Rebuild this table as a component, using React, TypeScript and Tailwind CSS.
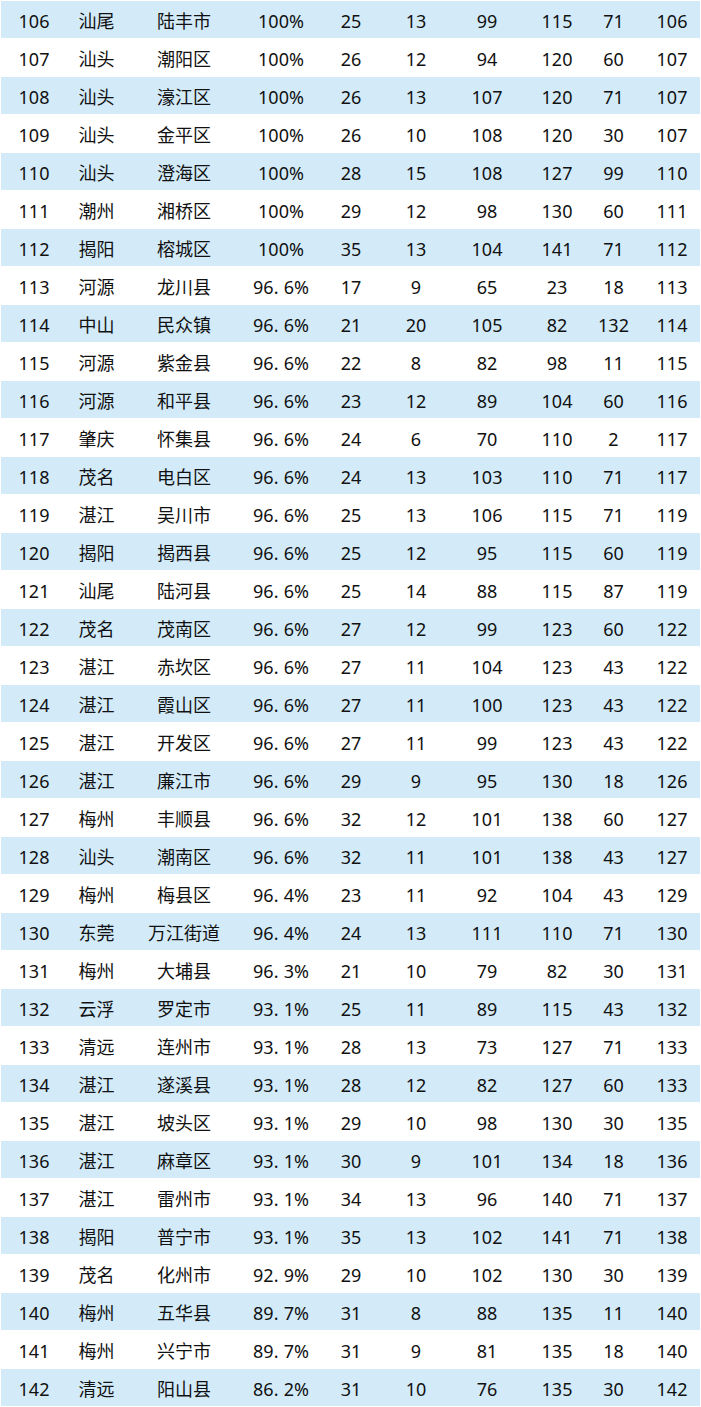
const rows = `106 汕尾 陆丰市 100% 25 13 99 115 71 106
107 汕头 潮阳区 100% 26 12 94 120 60 107
108 汕头 濠江区 100% 26 13 107 120 71 107
109 汕头 金平区 100% 26 10 108 120 30 107
110 汕头 澄海区 100% 28 15 108 127 99 110
111 潮州 湘桥区 100% 29 12 98 130 60 111
112 揭阳 榕城区 100% 35 13 104 141 71 112
113 河源 龙川县 96.6% 17 9 65 23 18 113
114 中山 民众镇 96.6% 21 20 105 82 132 114
115 河源 紫金县 96.6% 22 8 82 98 11 115
116 河源 和平县 96.6% 23 12 89 104 60 116
117 肇庆 怀集县 96.6% 24 6 70 110 2 117
118 茂名 电白区 96.6% 24 13 103 110 71 117
119 湛江 吴川市 96.6% 25 13 106 115 71 119
120 揭阳 揭西县 96.6% 25 12 95 115 60 119
121 汕尾 陆河县 96.6% 25 14 88 115 87 119
122 茂名 茂南区 96.6% 27 12 99 123 60 122
123 湛江 赤坎区 96.6% 27 11 104 123 43 122
124 湛江 霞山区 96.6% 27 11 100 123 43 122
125 湛江 开发区 96.6% 27 11 99 123 43 122
126 湛江 廉江市 96.6% 29 9 95 130 18 126
127 梅州 丰顺县 96.6% 32 12 101 138 60 127
128 汕头 潮南区 96.6% 32 11 101 138 43 127
129 梅州 梅县区 96.4% 23 11 92 104 43 129
130 东莞 万江街道 96.4% 24 13 111 110 71 130
131 梅州 大埔县 96.3% 21 10 79 82 30 131
132 云浮 罗定市 93.1% 25 11 89 115 43 132
133 清远 连州市 93.1% 28 13 73 127 71 133
134 湛江 遂溪县 93.1% 28 12 82 127 60 133
135 湛江 坡头区 93.1% 29 10 98 130 30 135
136 湛江 麻章区 93.1% 30 9 101 134 18 136
137 湛江 雷州市 93.1% 34 13 96 140 71 137
138 揭阳 普宁市 93.1% 35 13 102 141 71 138
139 茂名 化州市 92.9% 29 10 102 130 30 139
140 梅州 五华县 89.7% 31 8 88 135 11 140
141 梅州 兴宁市 89.7% 31 9 81 135 18 140
142 清远 阳山县 86.2% 31 10 76 135 30 142`
  .split('\n')
  .map(line => line.split(' '));

// percentages like 96.6% are drawn with a wide half-width period
function Pct({ value }: { value: string }) {
  const dot = value.indexOf('.');
  if (dot < 0) return <>{value}</>;
  return (
    <>
      {value.slice(0, dot)}
      <span className="inline-block w-[10px] text-left">.</span>
      {value.slice(dot + 1)}
    </>
  );
}

export default function App() {
  return (
    <main
      className="w-[701px] bg-white p-px flex flex-col gap-px text-[18px] text-[#111]"
      style={{ fontFamily: '"Noto Sans", "Noto Sans CJK SC", sans-serif' }}
    >
      {rows.map((r, i) => (
        <div
          key={r[0]}
          className={`h-[37px] w-full overflow-hidden grid grid-cols-[66px_59px_116px_78px_62px_68px_74px_66px_47px_70px] items-center pt-[3px] ${
            i % 2 === 0 ? 'bg-[#d3ebf9]' : 'bg-white'
          }`}
        >
          {r.map((cell, j) => (
            <div key={j} className="flex justify-center whitespace-nowrap leading-none">
              {j === 3 ? <Pct value={cell} /> : cell}
            </div>
          ))}
        </div>
      ))}
    </main>
  );
}
